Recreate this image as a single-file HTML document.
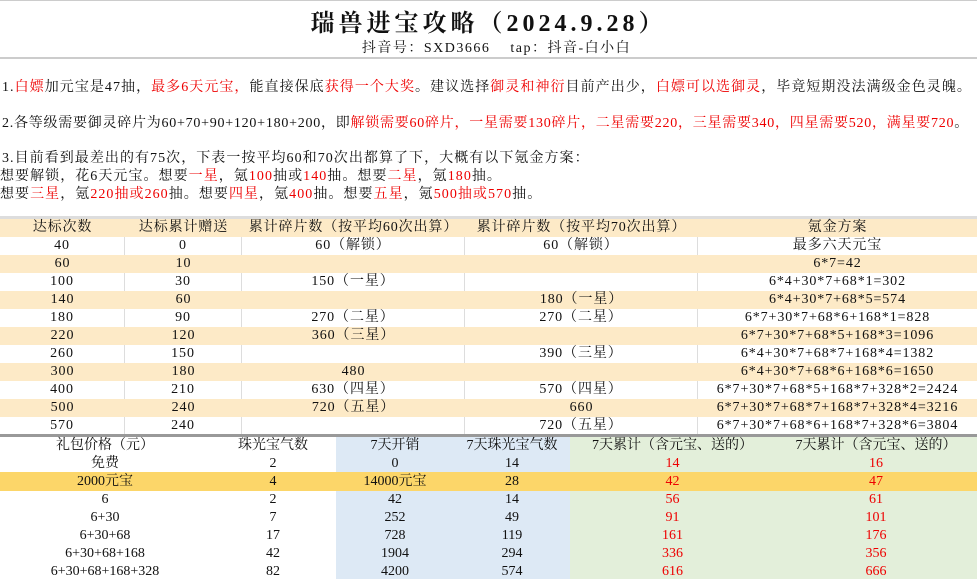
<!DOCTYPE html>
<html><head><meta charset="utf-8"><style>
*{margin:0;padding:0;box-sizing:border-box}
body{width:977px;height:579px;overflow:hidden;background:#fff;font-family:"Liberation Serif","Noto Serif CJK SC",serif;color:#111;position:relative}
.a{position:absolute;white-space:nowrap}
.r{color:#e00}
.t1{top:0;left:0;width:977px;height:1px;background:#ccc}
.hr{top:57px;left:0;width:977px;height:2px;background:#ccc}
.p{font-size:14px;left:2px;letter-spacing:1.05px}
.row{position:absolute;left:0;width:977px;height:18px;display:flex;font-size:14px;line-height:18px}
.tt div{letter-spacing:0.9px}
.row div{text-align:center;overflow:visible;white-space:nowrap}
.pe{background:#fdeac7}
.tb div{border-right:1px solid #ddd}
.tb div:last-child{border-right:none}
.c1{width:125px}.c2{width:117px}.c3{width:223px}.c4{width:233px}.c5{width:279px}
.d1{width:210px}.d2{width:126px}.d3{width:118px;background:#dde9f5}.d4{width:116px;background:#dde9f5}.d5{width:205px;background:#e3efda;color:#e00}.d6{width:202px;background:#e3efda;color:#e00}
.or div{background:#fcd669 !important}
</style></head><body>
<div class="a t1"></div>
<div class="a" style="top:3px;left:0;width:977px;text-align:center;font-size:24px;font-weight:bold;letter-spacing:4px">瑞兽进宝攻略（2024.9.28）</div>
<div class="a" style="top:37px;left:8px;width:977px;text-align:center;font-size:14px;letter-spacing:1.5px">抖音号：SXD3666&nbsp;&nbsp;&nbsp;&nbsp;tap：抖音-白小白</div>
<div class="a hr"></div>
<div class="a p" style="top:76px">1.<span class="r">白嫖</span>加元宝是47抽，<span class="r">最多6天元宝，</span>能直接保底<span class="r">获得一个大奖</span>。建议选择<span class="r">御灵和神衍</span>目前产出少，<span class="r">白嫖可以选御灵</span>，毕竟短期没法满级金色灵魄。</div>
<div class="a p" style="top:112px;letter-spacing:0.75px">2.各等级需要御灵碎片为60+70+90+120+180+200，即<span class="r">解锁需要60碎片，一星需要130碎片，二星需要220，三星需要340，四星需要520，满星要720</span>。</div>
<div class="a p" style="top:147px">3.目前看到最差出的有75次，下表一按平均60和70次出都算了下，大概有以下氪金方案：</div>
<div class="a p" style="top:165px;left:0">想要解锁，花6天元宝。想要<span class="r">一星</span>，氪<span class="r">100</span>抽或<span class="r">140</span>抽。想要<span class="r">二星</span>，氪<span class="r">180</span>抽。</div>
<div class="a p" style="top:183px;left:0">想要<span class="r">三星</span>，氪<span class="r">220抽或260</span>抽。想要<span class="r">四星</span>，氪<span class="r">400</span>抽。想要<span class="r">五星</span>，氪<span class="r">500抽或570</span>抽。</div>
<div class="a" style="top:216px;left:0;width:977px;height:3px;background:#ddd"></div>

<div class="row pe tt" style="top:219px"><div class="c1">达标次数</div><div class="c2">达标累计赠送</div><div class="c3">累计碎片数（按平均60次出算）</div><div class="c4">累计碎片数（按平均70次出算）</div><div class="c5">氪金方案</div></div>
<div class="row tb tt" style="top:237px"><div class="c1">40</div><div class="c2">0</div><div class="c3">60（解锁）</div><div class="c4">60（解锁）</div><div class="c5">最多六天元宝</div></div>
<div class="row pe tt" style="top:255px"><div class="c1">60</div><div class="c2">10</div><div class="c3"></div><div class="c4"></div><div class="c5">6*7=42</div></div>
<div class="row tb tt" style="top:273px"><div class="c1">100</div><div class="c2">30</div><div class="c3">150（一星）</div><div class="c4"></div><div class="c5">6*4+30*7+68*1=302</div></div>
<div class="row pe tt" style="top:291px"><div class="c1">140</div><div class="c2">60</div><div class="c3"></div><div class="c4">180（一星）</div><div class="c5">6*4+30*7+68*5=574</div></div>
<div class="row tb tt" style="top:309px"><div class="c1">180</div><div class="c2">90</div><div class="c3">270（二星）</div><div class="c4">270（二星）</div><div class="c5">6*7+30*7+68*6+168*1=828</div></div>
<div class="row pe tt" style="top:327px"><div class="c1">220</div><div class="c2">120</div><div class="c3">360（三星）</div><div class="c4"></div><div class="c5">6*7+30*7+68*5+168*3=1096</div></div>
<div class="row tb tt" style="top:345px"><div class="c1">260</div><div class="c2">150</div><div class="c3"></div><div class="c4">390（三星）</div><div class="c5">6*4+30*7+68*7+168*4=1382</div></div>
<div class="row pe tt" style="top:363px"><div class="c1">300</div><div class="c2">180</div><div class="c3">480</div><div class="c4"></div><div class="c5">6*4+30*7+68*6+168*6=1650</div></div>
<div class="row tb tt" style="top:381px"><div class="c1">400</div><div class="c2">210</div><div class="c3">630（四星）</div><div class="c4">570（四星）</div><div class="c5">6*7+30*7+68*5+168*7+328*2=2424</div></div>
<div class="row pe tt" style="top:399px"><div class="c1">500</div><div class="c2">240</div><div class="c3">720（五星）</div><div class="c4">660</div><div class="c5">6*7+30*7+68*7+168*7+328*4=3216</div></div>
<div class="row tb tt" style="top:417px"><div class="c1">570</div><div class="c2">240</div><div class="c3"></div><div class="c4">720（五星）</div><div class="c5">6*7+30*7+68*6+168*7+328*6=3804</div></div>
<div class="a" style="top:434px;left:0;width:977px;height:3px;background:#999"></div>

<div class="row" style="top:437px"><div class="d1">礼包价格（元）</div><div class="d2">珠光宝气数</div><div class="d3">7天开销</div><div class="d4">7天珠光宝气数</div><div class="d5" style="color:#111">7天累计（含元宝、送的）</div><div class="d6" style="color:#111">7天累计（含元宝、送的）</div></div>
<div class="row" style="top:455px"><div class="d1">免费</div><div class="d2">2</div><div class="d3">0</div><div class="d4">14</div><div class="d5">14</div><div class="d6">16</div></div>
<div class="row or" style="top:472px;height:19px;line-height:19px"><div class="d1">2000元宝</div><div class="d2">4</div><div class="d3">14000元宝</div><div class="d4">28</div><div class="d5">42</div><div class="d6">47</div></div>
<div class="row" style="top:491px"><div class="d1">6</div><div class="d2">2</div><div class="d3">42</div><div class="d4">14</div><div class="d5">56</div><div class="d6">61</div></div>
<div class="row" style="top:509px"><div class="d1">6+30</div><div class="d2">7</div><div class="d3">252</div><div class="d4">49</div><div class="d5">91</div><div class="d6">101</div></div>
<div class="row" style="top:527px"><div class="d1">6+30+68</div><div class="d2">17</div><div class="d3">728</div><div class="d4">119</div><div class="d5">161</div><div class="d6">176</div></div>
<div class="row" style="top:545px"><div class="d1">6+30+68+168</div><div class="d2">42</div><div class="d3">1904</div><div class="d4">294</div><div class="d5">336</div><div class="d6">356</div></div>
<div class="row" style="top:563px;height:16px"><div class="d1">6+30+68+168+328</div><div class="d2">82</div><div class="d3">4200</div><div class="d4">574</div><div class="d5">616</div><div class="d6">666</div></div>
</body></html>
